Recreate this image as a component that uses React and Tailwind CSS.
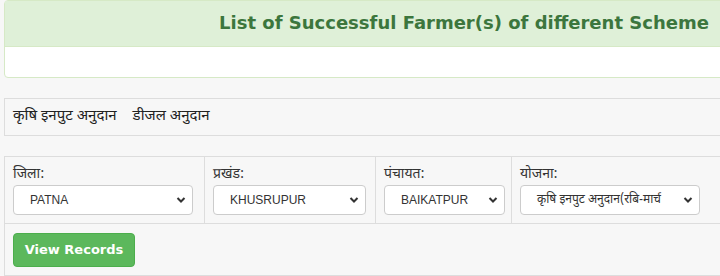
import React from 'react';

const hindi = { fontFamily: '"Noto Sans Devanagari", "Noto Sans", "Liberation Sans", sans-serif' };

function Chevron() {
  return (
    <svg width="10" height="8" viewBox="0 0 10 8" className="shrink-0">
      <path d="M1.5 2 L5 5.5 L8.5 2" fill="none" stroke="#333" strokeWidth="2" />
    </svg>
  );
}

function FakeSelect(props) {
  return (
    <div
      className={`flex h-[30px] items-center justify-between rounded-[4px] border border-[#ccc] bg-white pl-[16px] pr-[6px] text-[12px] text-[#333] ${props.width}`}
    >
      <span
        className="whitespace-nowrap"
        style={props.hindi ? hindi : { fontFamily: '"Liberation Sans", Arial, sans-serif' }}
      >
        {props.value}
      </span>
      <Chevron />
    </div>
  );
}

function FilterCell(props) {
  return (
    <div className={`flex flex-col border-l border-[#ddd] px-[8px] pt-[8px] pb-[8px] first:border-l-0 ${props.cell}`}>
      <label className="h-[20px] text-[14px] leading-[20px] text-[#333]" style={hindi}>{props.label}</label>
      <FakeSelect value={props.value} width={props.width} hindi={props.hindi} />
    </div>
  );
}

export default function App() {
  return (
    <div className="h-[276px] w-[720px] overflow-hidden bg-[#f7f7f7]">
      <div className="ml-[4px] w-[920px]">
        <div className="rounded-[4px] border border-[#d6e9c6] bg-white">
          <div className="flex h-[46px] items-center justify-center border-b border-[#d6e9c6] bg-[#dff0d8] pb-[2px]">
            <h3 className="text-[18px] font-bold text-[#3c763d]" style={{ fontFamily: '"DejaVu Sans", Verdana, sans-serif' }}>
              List of Successful Farmer(s) of different Scheme
            </h3>
          </div>
          <div className="h-[30px]" />
        </div>

        <div className="mt-[20px] flex h-[38px] items-center gap-[16px] border border-[#ddd] px-[8px] text-[15px] text-[#222]" style={hindi}>
          <span>कृषि इनपुट अनुदान</span>
          <span>डीजल अनुदान</span>
        </div>

        <div className="mt-[20px] border border-[#ddd]">
          <div className="flex border-b border-[#ddd]">
            <FilterCell cell="w-[199px]" label="जिला:" value="PATNA" width="w-[180px]" />
            <FilterCell cell="w-[171px]" label="प्रखंड:" value="KHUSRUPUR" width="w-[153px]" />
            <FilterCell cell="w-[136px]" label="पंचायत:" value="BAIKATPUR" width="w-[121px]" />
            <FilterCell cell="flex-1" label="योजना:" value="कृषि इनपुट अनुदान(रबि-मार्च" width="w-[180px]" hindi />
          </div>
          <div className="px-[8px] pt-[9px] pb-[8px]">
            <button
              className="h-[34px] w-[122px] rounded-[4px] border border-[#4cae4c] bg-[#5cb85c] text-[13px] font-bold text-white"
              style={{ fontFamily: '"DejaVu Sans", Verdana, sans-serif' }}
            >
              View Records
            </button>
          </div>
        </div>
      </div>
    </div>
  );
}
